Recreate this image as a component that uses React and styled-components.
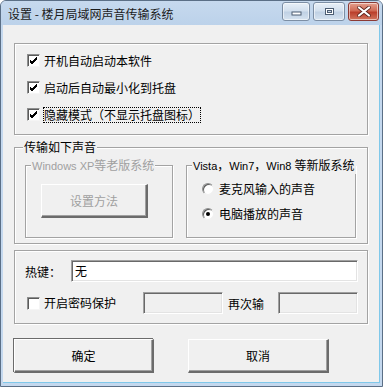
import React from 'react'
import styled, { createGlobalStyle } from 'styled-components'

const Global = createGlobalStyle`
  html, body { margin: 0; padding: 0; background: #fff; }
  body { font-family: "Noto Sans CJK SC", "Liberation Sans", sans-serif; font-size: 12px; color: #000; }
`

const Window = styled.div`
  box-sizing: border-box;
  width: 383px;
  height: 387px;
  display: flex;
  flex-direction: column;
  border: 1px solid #5b6f86;
  border-radius: 6px 6px 0 0;
  background: #c4d8ee;
  overflow: hidden;
`

const TitleBar = styled.div`
  height: 24px;
  display: flex;
  align-items: flex-start;
  padding: 0 3px 0 7px;
  background: linear-gradient(#c6d9ee, #bcd2ea);
`

const Title = styled.div`
  flex: 1;
  line-height: 26px;
  font-size: 12px;
  color: #1b1b1b;
`

const CaptionButtons = styled.div`
  display: flex;
  gap: 3px;
  margin-top: 1px;
`

const CaptionButton = styled.div`
  box-sizing: border-box;
  width: ${p => p.$w}px;
  height: 19px;
  border: 1px solid ${p => (p.$close ? '#8c3a34' : '#7c8ea4')};
  border-radius: 3px;
  background: ${p => (p.$close
    ? 'linear-gradient(#e4a08f, #d06a55 45%, #bb3f2c 55%, #d2765f)'
    : 'linear-gradient(#e8f0f8, #d3e0ee 45%, #c0d1e4 55%, #d6e3f0)')};
  box-shadow: inset 0 0 0 1px rgba(255,255,255,0.55);
  display: flex;
  align-items: center;
  justify-content: center;
`

const Client = styled.div`
  flex: 1;
  margin: 0 2px 3px 2px;
  background: #f0f0f0;
  padding: 18px 11px 0 11px;
  display: flex;
  flex-direction: column;
  border-right: 1px solid #7fc8ea;
  border-bottom: 1px solid #7fc8ea;
`

const Group = styled.div`
  position: relative;
  box-sizing: border-box;
  height: ${p => p.$h}px;
  width: ${p => (p.$w ? `${p.$w}px` : 'auto')};
  margin-top: ${p => p.$mt || 0}px;
  border: 1px solid #a3a3a3;
  box-shadow: inset 1px 1px 0 #fff, 1px 1px 0 #fff;
  padding: ${p => p.$pad};
`

const Caption = styled.span`
  position: absolute;
  top: -9px;
  left: ${p => p.$left}px;
  padding: 0 1px;
  background: #f0f0f0;
  line-height: 16px;
  color: ${p => (p.$disabled ? '#a0a0a0' : '#000')};
  white-space: nowrap;
`

const Latin = styled.span`
  font-family: "Liberation Sans", Arial, sans-serif;
  font-size: 11px;
`

const CheckRow = styled.label`
  height: 27px;
  display: flex;
  align-items: center;
  gap: 3px;
`

const Box = styled.span`
  box-sizing: border-box;
  width: 13px;
  height: 13px;
  flex: none;
  background: #fff;
  border-style: solid;
  border-width: 1px;
  border-color: #8e8f8f #f5f5f5 #f5f5f5 #8e8f8f;
  box-shadow: inset 1px 1px 0 #5a5a5a;
  display: flex;
  align-items: center;
  justify-content: center;
`

const Text = styled.span`
  border: 1px ${p => (p.$focus ? 'dotted #000' : 'solid transparent')};
  padding: 0;
  line-height: 14px;
  white-space: nowrap;
  color: ${p => (p.$disabled ? '#a0a0a0' : '#000')};
`

const SoundRow = styled.div`
  display: flex;
  gap: 13px;
`

const Button = styled.div`
  box-sizing: border-box;
  width: ${p => p.$w}px;
  height: 34px;
  display: flex;
  align-items: center;
  justify-content: center;
  background: #f0f0f0;
  border-style: solid;
  border-width: 1px 2px 2px 1px;
  border-color: #fff #6b6b6b #6b6b6b #fff;
  box-shadow: ${p => (p.$default ? '-1px -1px 0 #6b6b6b, inset -1px -1px 0 #a0a0a0' : 'inset -1px -1px 0 #a0a0a0')};
  color: ${p => (p.$disabled ? '#a0a0a0' : '#000')};
  font-size: 12px;
`

const RadioRow = styled.label`
  height: 25px;
  display: flex;
  align-items: center;
  gap: 4px;
`

const Radio = styled.span`
  box-sizing: border-box;
  width: 12px;
  height: 12px;
  flex: none;
  border-radius: 50%;
  background: #fff;
  border: 1px solid;
  border-color: #8e8f8f #f0f0f0 #f0f0f0 #8e8f8f;
  box-shadow: inset 1px 1px 0 #5a5a5a;
  display: flex;
  align-items: center;
  justify-content: center;
  &::after {
    content: '';
    width: 4px;
    height: 4px;
    border-radius: 50%;
    background: ${p => (p.$on ? '#000' : 'transparent')};
  }
`

const FieldRow = styled.div`
  display: flex;
  align-items: center;
  height: 22px;
  margin-top: ${p => p.$mt || 0}px;
`

const FieldLabel = styled.span`
  width: ${p => p.$w}px;
  flex: none;
  white-space: nowrap;
  padding-left: ${p => p.$pl || 0}px;
  box-sizing: border-box;
`

const Input = styled.div`
  box-sizing: border-box;
  width: ${p => p.$w}px;
  height: 22px;
  flex: none;
  background: ${p => (p.$disabled ? '#f0f0f0' : '#fff')};
  border-style: solid;
  border-width: 1px;
  border-color: #a0a0a0 #fff #fff #a0a0a0;
  box-shadow: inset 1px 1px 0 #696969, inset -1px -1px 0 #e3e3e3;
  padding: 3px 0 0 3px;
  line-height: 14px;
`

const ButtonBar = styled.div`
  display: flex;
  gap: 34px;
  margin-top: 15px;
`

const Check = () => (
  <svg width="9" height="9" viewBox="0 0 9 9">
    <path d="M1 4 L3 6 L8 1 M1 5 L3 7 L8 2 M1 6 L3 8 L8 3" stroke="#000" strokeWidth="1" fill="none" />
  </svg>
)

const Minimize = () => (
  <svg width="11" height="8" viewBox="0 0 11 8">
    <rect x="1" y="4" width="9" height="3" fill="#fff" stroke="#4c5d72" strokeWidth="1" />
  </svg>
)

const Maximize = () => (
  <svg width="11" height="9" viewBox="0 0 11 9">
    <rect x="1.5" y="1.5" width="8" height="6" fill="#fff" stroke="#4c5d72" strokeWidth="1" />
    <rect x="3.5" y="3.5" width="4" height="2" fill="#c9d7e6" stroke="#4c5d72" strokeWidth="1" />
  </svg>
)

const Close = () => (
  <svg width="14" height="11" viewBox="0 0 14 11">
    <path d="M2 1.5 L12 9.5 M12 1.5 L2 9.5" stroke="#5a231c" strokeWidth="3.6" strokeLinecap="round" />
    <path d="M2 1.5 L12 9.5 M12 1.5 L2 9.5" stroke="#fff" strokeWidth="2.2" strokeLinecap="round" />
  </svg>
)

export default function App() {
  return (
    <>
      <Global />
      <Window>
        <TitleBar>
          <Title>设置 - 楼月局域网声音传输系统</Title>
          <CaptionButtons>
            <CaptionButton $w={28}><Minimize /></CaptionButton>
            <CaptionButton $w={32}><Maximize /></CaptionButton>
            <CaptionButton $w={31} $close><Close /></CaptionButton>
          </CaptionButtons>
        </TitleBar>
        <Client>
          <Group $h={92} $pad="3px 0 0 12px">
            <CheckRow>
              <Box><Check /></Box>
              <Text>开机自动启动本软件</Text>
            </CheckRow>
            <CheckRow>
              <Box><Check /></Box>
              <Text>启动后自动最小化到托盘</Text>
            </CheckRow>
            <CheckRow>
              <Box><Check /></Box>
              <Text $focus>隐藏模式（不显示托盘图标）</Text>
            </CheckRow>
          </Group>

          <Group $h={97} $mt={12} $pad="17px 0 0 10px">
            <Caption $left={8}>传输如下声音</Caption>
            <SoundRow>
              <Group $h={73} $w={148} $pad="18px 0 0 15px">
                <Caption $left={5} $disabled><Latin>Windows XP</Latin>等老版系统</Caption>
                <Button $w={107} $disabled>设置方法</Button>
              </Group>
              <Group $h={73} $w={170} $pad="10px 0 0 15px">
                <Caption $left={5}><Latin>Vista</Latin>，<Latin>Win7</Latin>，<Latin>Win8 </Latin>等新版系统</Caption>
                <RadioRow>
                  <Radio />
                  <Text>麦克风输入的声音</Text>
                </RadioRow>
                <RadioRow>
                  <Radio $on />
                  <Text>电脑播放的声音</Text>
                </RadioRow>
              </Group>
            </SoundRow>
          </Group>

          <Group $h={74} $mt={6} $pad="9px 0 0 10px">
            <FieldRow>
              <FieldLabel $w={46}>热键：</FieldLabel>
              <Input $w={287}>无</Input>
            </FieldRow>
            <FieldRow $mt={10}>
              <FieldLabel $w={118} $pl={2}>
                <CheckRow as="span" style={{ height: 22 }}>
                  <Box />
                  <Text>开启密码保护</Text>
                </CheckRow>
              </FieldLabel>
              <Input $w={80} $disabled />
              <FieldLabel $w={55} $pl={5}>再次输</FieldLabel>
              <Input $w={80} $disabled />
            </FieldRow>
          </Group>

          <ButtonBar>
            <Button $w={140} $default>确定</Button>
            <Button $w={141}>取消</Button>
          </ButtonBar>
        </Client>
      </Window>
    </>
  )
}
